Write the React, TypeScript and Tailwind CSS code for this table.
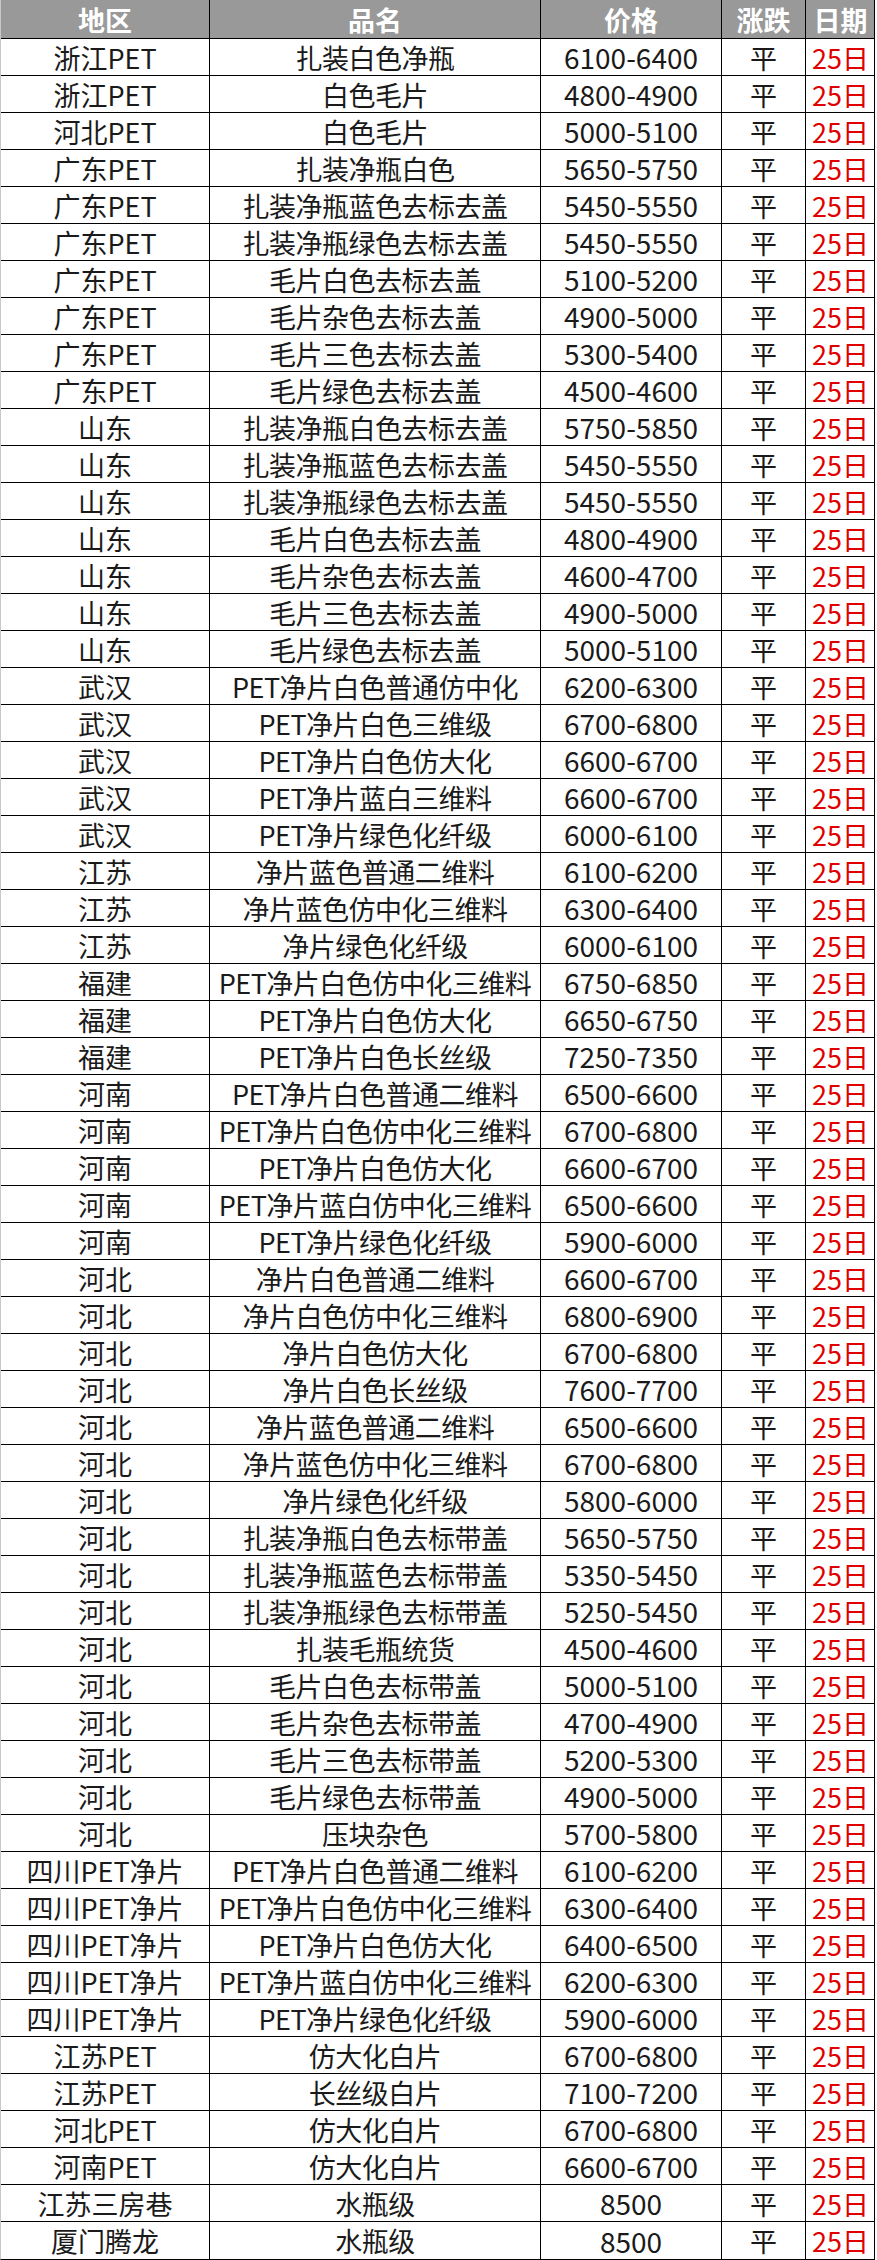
import React from "react";

type Row = [string, string, string];

const ROWS: Row[] = [
  ["浙江PET", "扎装白色净瓶", "6100-6400"],
  ["浙江PET", "白色毛片", "4800-4900"],
  ["河北PET", "白色毛片", "5000-5100"],
  ["广东PET", "扎装净瓶白色", "5650-5750"],
  ["广东PET", "扎装净瓶蓝色去标去盖", "5450-5550"],
  ["广东PET", "扎装净瓶绿色去标去盖", "5450-5550"],
  ["广东PET", "毛片白色去标去盖", "5100-5200"],
  ["广东PET", "毛片杂色去标去盖", "4900-5000"],
  ["广东PET", "毛片三色去标去盖", "5300-5400"],
  ["广东PET", "毛片绿色去标去盖", "4500-4600"],
  ["山东", "扎装净瓶白色去标去盖", "5750-5850"],
  ["山东", "扎装净瓶蓝色去标去盖", "5450-5550"],
  ["山东", "扎装净瓶绿色去标去盖", "5450-5550"],
  ["山东", "毛片白色去标去盖", "4800-4900"],
  ["山东", "毛片杂色去标去盖", "4600-4700"],
  ["山东", "毛片三色去标去盖", "4900-5000"],
  ["山东", "毛片绿色去标去盖", "5000-5100"],
  ["武汉", "PET净片白色普通仿中化", "6200-6300"],
  ["武汉", "PET净片白色三维级", "6700-6800"],
  ["武汉", "PET净片白色仿大化", "6600-6700"],
  ["武汉", "PET净片蓝白三维料", "6600-6700"],
  ["武汉", "PET净片绿色化纤级", "6000-6100"],
  ["江苏", "净片蓝色普通二维料", "6100-6200"],
  ["江苏", "净片蓝色仿中化三维料", "6300-6400"],
  ["江苏", "净片绿色化纤级", "6000-6100"],
  ["福建", "PET净片白色仿中化三维料", "6750-6850"],
  ["福建", "PET净片白色仿大化", "6650-6750"],
  ["福建", "PET净片白色长丝级", "7250-7350"],
  ["河南", "PET净片白色普通二维料", "6500-6600"],
  ["河南", "PET净片白色仿中化三维料", "6700-6800"],
  ["河南", "PET净片白色仿大化", "6600-6700"],
  ["河南", "PET净片蓝白仿中化三维料", "6500-6600"],
  ["河南", "PET净片绿色化纤级", "5900-6000"],
  ["河北", "净片白色普通二维料", "6600-6700"],
  ["河北", "净片白色仿中化三维料", "6800-6900"],
  ["河北", "净片白色仿大化", "6700-6800"],
  ["河北", "净片白色长丝级", "7600-7700"],
  ["河北", "净片蓝色普通二维料", "6500-6600"],
  ["河北", "净片蓝色仿中化三维料", "6700-6800"],
  ["河北", "净片绿色化纤级", "5800-6000"],
  ["河北", "扎装净瓶白色去标带盖", "5650-5750"],
  ["河北", "扎装净瓶蓝色去标带盖", "5350-5450"],
  ["河北", "扎装净瓶绿色去标带盖", "5250-5450"],
  ["河北", "扎装毛瓶统货", "4500-4600"],
  ["河北", "毛片白色去标带盖", "5000-5100"],
  ["河北", "毛片杂色去标带盖", "4700-4900"],
  ["河北", "毛片三色去标带盖", "5200-5300"],
  ["河北", "毛片绿色去标带盖", "4900-5000"],
  ["河北", "压块杂色", "5700-5800"],
  ["四川PET净片", "PET净片白色普通二维料", "6100-6200"],
  ["四川PET净片", "PET净片白色仿中化三维料", "6300-6400"],
  ["四川PET净片", "PET净片白色仿大化", "6400-6500"],
  ["四川PET净片", "PET净片蓝白仿中化三维料", "6200-6300"],
  ["四川PET净片", "PET净片绿色化纤级", "5900-6000"],
  ["江苏PET", "仿大化白片", "6700-6800"],
  ["江苏PET", "长丝级白片", "7100-7200"],
  ["河北PET", "仿大化白片", "6700-6800"],
  ["河南PET", "仿大化白片", "6600-6700"],
  ["江苏三房巷", "水瓶级", "8500"],
  ["厦门腾龙", "水瓶级", "8500"],
];

const FONT = { fontFamily: '"Noto Sans CJK SC", "Noto Sans", sans-serif' };

export default function App() {
  return (
    <div className="w-[877px] bg-white" style={FONT}>
      <div className="w-[875px] border-l border-l-[#c8c8c8] border-r border-r-black border-b border-b-black">
        {/* Header */}
        <div className="grid grid-cols-[209px_331px_181px_84px_69px] h-[39px] bg-[#999999] text-white font-bold text-[27px] leading-none border-b border-black">
          <div className="flex items-center justify-center border-r border-black">地区</div>
          <div className="flex items-center justify-center border-r border-black">品名</div>
          <div className="flex items-center justify-center border-r border-black">价格</div>
          <div className="flex items-center justify-center border-r border-black">涨跌</div>
          <div className="flex items-center justify-center">日期</div>
        </div>

        {/* Rows */}
        {ROWS.map(([region, name, price], i) => (
          <div
            key={i}
            className={`grid grid-cols-[209px_331px_181px_84px_69px] h-[37px] text-[27px] leading-none text-[#1a1a1a] ${
              i < ROWS.length - 1 ? "border-b border-black" : ""
            }`}
          >
            <div className="flex items-center justify-center border-r border-black whitespace-nowrap">{region}</div>
            <div className="flex items-center justify-center border-r border-black whitespace-nowrap tracking-[-0.5px]">{name}</div>
            <div className="flex items-center justify-center border-r border-black text-[28px]">{price}</div>
            <div className="flex items-center justify-center border-r border-black">平</div>
            <div className="flex items-center justify-center text-[#e00000]">25日</div>
          </div>
        ))}
      </div>
    </div>
  );
}
